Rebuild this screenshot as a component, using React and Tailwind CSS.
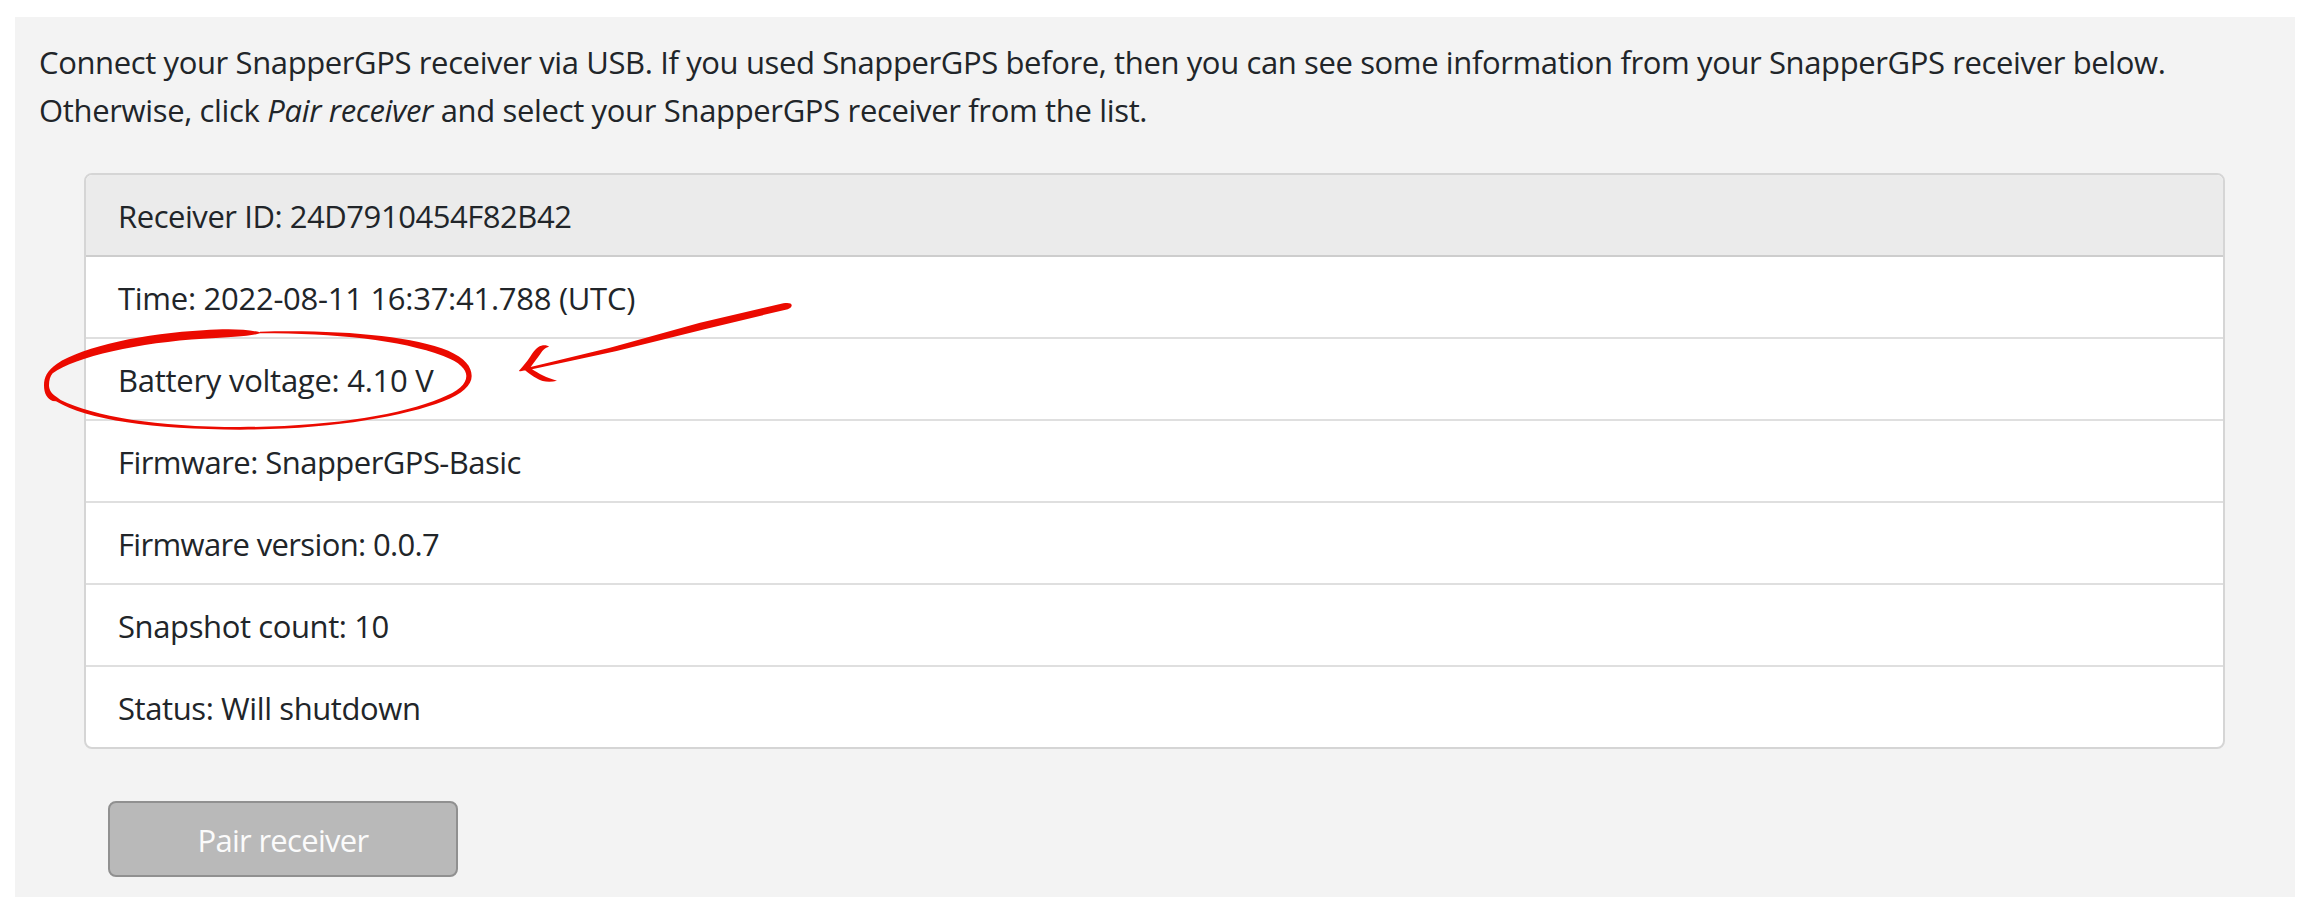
const rows = [
  { text: 'Time: 2022-08-11 16:37:41.788 (UTC)', spacing: 'tracking-[-0.27px]' },
  { text: 'Battery voltage: 4.10 V', spacing: 'tracking-[-0.26px]' },
  { text: 'Firmware: SnapperGPS-Basic', spacing: 'tracking-[-0.54px]' },
  { text: 'Firmware version: 0.0.7', spacing: 'tracking-[-0.65px]' },
  { text: 'Snapshot count: 10', spacing: 'tracking-[-0.39px]' },
  { text: 'Status: Will shutdown', spacing: 'tracking-[-0.4px]' },
];

function Annotations() {
  return (
    <svg
      className="pointer-events-none absolute left-0 top-0"
      width="900"
      height="500"
      viewBox="0 0 900 500"
      fill="#eb0a00"
      aria-hidden="true"
    >
      <g transform="translate(30 290) scale(0.33333)">
        <path
          fillRule="evenodd"
          d="M690 127 C650 117 590 116 520 121 C350 130 160 168 80 222 C52 241 42 262 42 286 C42 312 52 327 68 333 L78 334 C170 389 370 419 630 419 C900 419 1120 380 1240 334 C1298 311 1325 286 1325 258 C1325 229 1305 205 1255 182 C1140 137 930 119 690 125 Z
             M690 130 C920 130 1110 150 1240 198 C1290 217 1309 238 1309 258 C1309 282 1286 303 1232 325 C1110 375 900 411 630 411 C380 411 190 379 92 330 L80 321 C65 312 57 300 57 286 C57 271 61 257 68 250 C135 200 330 157 520 146 C600 142 660 139 690 130 Z"
        />
      </g>
      <g transform="translate(500 280) scale(0.33333)">
        <path d="M57 272 C70 258 80 246 92 228 C104 209 115 198 129 196 C138 195 143 197 147 200 C137 202 132 207 127 213 C117 228 106 242 92 261 L330 203 L600 128 L850 70 C864 67 876 69 875 77 C874 84 866 87 857 89 L620 146 L350 213 L96 268 C115 280 140 294 171 302 C157 306 141 306 128 303 C112 297 91 284 77 272 C71 271 64 276 57 273 Z" />
      </g>
    </svg>
  );
}

export default function App() {
  return (
    <div className="relative h-[907px] w-[2307px] overflow-hidden bg-white pl-[15px] pt-[17px] font-['Open_Sans','Noto_Sans',sans-serif] text-[31px] font-[370] text-[#212529]">
      <main className="h-[880px] w-[2280px] bg-[#f3f3f3] pt-[21px]">
        <p className="pl-6 leading-[48px] whitespace-nowrap">
          <span className="block">
            <span className="tracking-[-0.38px]">
              Connect your SnapperGPS receiver via USB. If you used SnapperGPS before, then you can see some information from your SnapperGPS receiver below.
            </span>
          </span>
          <span className="block">
            <span className="tracking-[-0.34px]">
              Otherwise, click <em>Pair receiver</em> and select your SnapperGPS receiver from the list.
            </span>
          </span>
        </p>
        <section className="ml-[69px] mt-[39px] w-[2141px] overflow-hidden rounded-lg border-2 border-[#d5d5d5] bg-white">
          <header className="flex h-[82px] items-center border-b-2 border-[#cdcdcd] bg-[#ebebeb] pl-8 pt-0.5">
            <span className="tracking-[-0.45px]">Receiver ID: 24D7910454F82B42</span>
          </header>
          <ul className="divide-y-2 divide-[#dfdfdf]">
            {rows.map((row) => (
              <li key={row.text} className="flex h-[82px] items-center pl-8 pt-0.5 last:h-20">
                <span className={row.spacing}>{row.text}</span>
              </li>
            ))}
          </ul>
        </section>
        <button
          type="button"
          disabled
          className="ml-[93px] mt-[52px] flex h-[76px] w-[350px] items-center justify-center rounded-lg border-2 border-[#909090] bg-[#b9b9b9] pt-0.5 text-[#fbfbfb]"
        >
          <span className="tracking-[-0.7px]">Pair receiver</span>
        </button>
      </main>
      <Annotations />
    </div>
  );
}
